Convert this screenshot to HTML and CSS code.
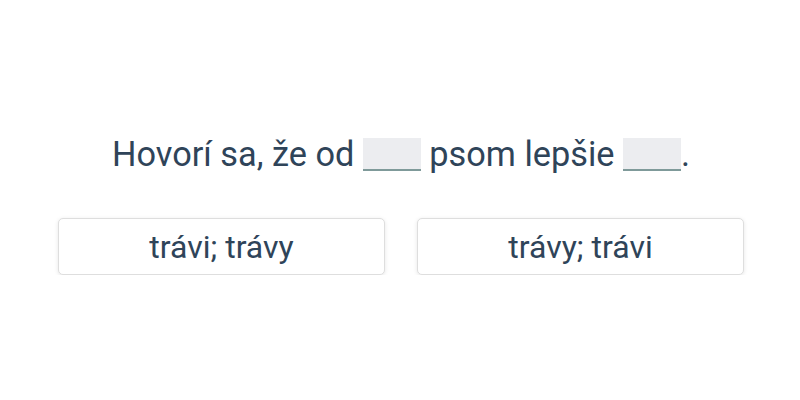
FILE: index.html
```html
<!DOCTYPE html>
<html lang="sk">
<head>
    <meta charset="UTF-8">
    <meta name="viewport" content="width=device-width, initial-scale=1.0">
    <title>Doplňovačka</title>
    <link rel="stylesheet" href="styles.css">
</head>
<body>
    <main class="quiz">
        <p class="question">
            Hovorí sa, že od <span class="blank"></span> psom lepšie <span class="blank"></span>.
        </p>
        <div class="answers">
            <button class="answer" type="button">trávi; trávy</button>
            <button class="answer" type="button">trávy; trávi</button>
        </div>
    </main>
</body>
</html>
```

FILE: styles.css
```css
body {
    margin: 0;
    font-family: Roboto, "Liberation Sans", sans-serif;
    background-color: #fff;
    color: #2f4459;
}

.quiz {
    padding: 134px 56px 0 58px;
}

.question {
    margin: 0 0 44px;
    text-align: center;
    font-size: 34.3px;
    line-height: 40px;
}

.blank {
    display: inline-block;
    width: 58px;
    height: 31px;
    background-color: #ecedf0;
    border-bottom: 2px solid #7f9a9a;
    vertical-align: -5px;
}

.answers {
    display: flex;
    gap: 32px;
}

.answer {
    flex: 1;
    height: 57px;
    background-color: #fff;
    border: 1px solid #dedede;
    border-radius: 5px;
    box-shadow: 0 1px 4px rgba(0, 0, 0, 0.1);
    font-family: inherit;
    font-size: 32px;
    color: #2f4459;
    cursor: pointer;
}
```
